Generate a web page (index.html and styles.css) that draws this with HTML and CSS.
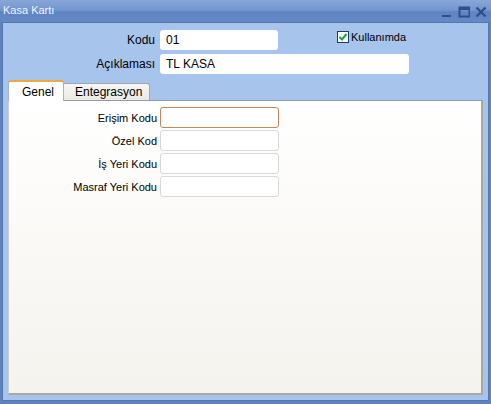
FILE: index.html
```html
<!DOCTYPE html>
<html>
<head>
<meta charset="utf-8">
<link rel="stylesheet" href="styles.css">
</head>
<body>
<div class="window">
  <div class="titlebar">
    <span class="title">Kasa Kartı</span>
    <div class="controls">
      <svg width="12" height="12" viewBox="0 0 12 12"><rect x="1" y="9" width="9" height="2" fill="#2f4f86"/></svg>
      <svg width="12" height="12" viewBox="0 0 12 12"><rect x="1.5" y="1.5" width="10" height="9" fill="none" stroke="#2f4f86" stroke-width="2"/><rect x="1" y="1" width="11" height="3" fill="#2f4f86"/></svg>
      <svg width="12" height="12" viewBox="0 0 12 12"><path d="M1.5 1.5 L10.5 10.5 M10.5 1.5 L1.5 10.5" stroke="#2f4f86" stroke-width="2.4"/></svg>
    </div>
  </div>
  <div class="content">
    <div class="header">
      <div class="hrow">
        <label class="hlabel">Kodu</label>
        <div class="hinput short">01</div>
        <div class="check">
          <span class="box"><svg width="10" height="10" viewBox="0 0 10 10"><path d="M1.5 5 L4 7.5 L8.5 2" fill="none" stroke="#22a23a" stroke-width="2"/></svg></span>
          <span>Kullanımda</span>
        </div>
      </div>
      <div class="hrow">
        <label class="hlabel">Açıklaması</label>
        <div class="hinput long">TL KASA</div>
      </div>
    </div>
    <div class="tabs">
      <div class="tab active">Genel</div>
      <div class="tab">Entegrasyon</div>
    </div>
    <div class="panel">
      <div class="frow"><label class="flabel">Erişim Kodu</label><div class="finput focus"></div></div>
      <div class="frow"><label class="flabel">Özel Kod</label><div class="finput"></div></div>
      <div class="frow"><label class="flabel">İş Yeri Kodu</label><div class="finput"></div></div>
      <div class="frow"><label class="flabel">Masraf Yeri Kodu</label><div class="finput"></div></div>
    </div>
  </div>
</div>
</body>
</html>
```
FILE: styles.css
```css
* { box-sizing: border-box; }
html, body { margin: 0; padding: 0; }
body {
  font-family: "Liberation Sans", Arial, sans-serif;
  font-size: 11px;
  color: #000;
  width: 491px;
  height: 404px;
  overflow: hidden;
}
.window {
  width: 491px;
  height: 404px;
  display: flex;
  flex-direction: column;
  background: #5f82bc;
  padding: 0 2px 3px 2px;
}
.titlebar {
  height: 22px;
  margin: 0 -2px;
  padding: 0 4px 0 3px;
  display: flex;
  align-items: center;
  justify-content: space-between;
  background: linear-gradient(#88a7d8 0%, #7496cf 45%, #5f84c2 55%, #6689c6 100%);
}
.title {
  color: #eef3fb;
  font-size: 11px;
  margin-top: -2px;
}
.controls {
  display: flex;
  gap: 5px;
  margin-top: 1px;
}
.content {
  flex: 1;
  display: flex;
  flex-direction: column;
  background: #a6c4ec;
  border: 1px solid #5577ad;
  padding: 7px 5px 5px 5px;
}
.header {
  display: flex;
  flex-direction: column;
  gap: 4px;
}
.hrow {
  display: flex;
  align-items: center;
  height: 20px;
}
.hlabel {
  width: 152px;
  text-align: right;
  padding-right: 5px;
  font-size: 12px;
}
.hinput {
  height: 20px;
  background: #fff;
  border-radius: 3px;
  padding: 3px 6px;
  font-size: 12px;
}
.short { width: 118px; }
.long { width: 249px; }
.check {
  display: flex;
  align-items: center;
  margin-left: 59px;
  margin-top: -7px;
  font-size: 11px;
  gap: 2px;
}
.box {
  width: 12px;
  height: 12px;
  border: 1px solid #1e3a66;
  background: #fff;
  display: flex;
  align-items: center;
  justify-content: center;
}
.tabs {
  display: flex;
  align-items: flex-end;
  margin-top: 5px;
  height: 21px;
}
.tab {
  height: 17px;
  padding: 0 12px;
  display: flex;
  align-items: center;
  font-size: 12px;
  background: linear-gradient(#f7f6f2, #ebe9e2);
  border: 1px solid #9ea7b4;
  border-bottom: none;
  border-left: none;
  border-radius: 0 3px 0 0;
}
.tab.active {
  height: 21px;
  width: 56px;
  padding-left: 13px;
  background: #fff;
  border: 1px solid #a5b4c9;
  border-top: 2px solid #efa93c;
  border-bottom: none;
  border-radius: 3px 3px 0 0;
  position: relative;
  z-index: 1;
  margin-bottom: -1px;
}
.tab:not(.active) {
  width: 86px;
  padding-left: 11px;
}
.panel {
  flex: 1;
  background: linear-gradient(#ffffff 0%, #faf9f6 50%, #f4f3ee 100%);
  border-top: 1px solid #8f9bb0;
  border-right: 2px solid #a9a9a0;
  border-bottom: 2px solid #a9a9a0;
  border-left: 1px solid #c9cfd7;
  padding: 6px 0 0 0;
  display: flex;
  flex-direction: column;
  gap: 2px;
}
.frow {
  display: flex;
  align-items: center;
  height: 21px;
}
.flabel {
  width: 151px;
  text-align: right;
  padding-right: 3px;
}
.finput {
  width: 119px;
  height: 21px;
  background: #fff;
  border: 1px solid #d9d9d9;
  border-radius: 3px;
}
.finput.focus {
  border-color: #c1865a;
}
```
